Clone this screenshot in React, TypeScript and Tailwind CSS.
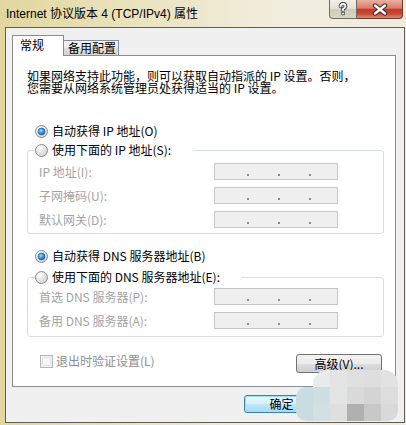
import React from "react";

function Radio({ checked }: { checked: boolean }) {
  return (
    <svg width="13" height="13" viewBox="0 0 13 13" className="shrink-0">
      <defs>
        <radialGradient id="rgOuter" cx="0.35" cy="0.3" r="0.85">
          <stop offset="0" stopColor="#ffffff" />
          <stop offset="1" stopColor="#c9c9c9" />
        </radialGradient>
        <radialGradient id="rgBlue" cx="0.4" cy="0.35" r="0.75">
          <stop offset="0" stopColor="#9fdcff" />
          <stop offset="0.55" stopColor="#2a8fdc" />
          <stop offset="1" stopColor="#0c5aa3" />
        </radialGradient>
      </defs>
      <circle cx="6.5" cy="6.5" r="6" fill="url(#rgOuter)" stroke="#8d8d8d" strokeWidth="1" />
      {checked && <circle cx="6.5" cy="6.5" r="3.4" fill="url(#rgBlue)" stroke="#1b5e99" strokeWidth="0.7" />}
    </svg>
  );
}

function IpBox() {
  return (
    <div className="flex h-[17px] w-[124px] items-start border border-[#c6c6c6] bg-[#efefef] pt-[10px]">
      <div className="ml-[32px] h-[2px] w-[2px] bg-[#8a8a8a]" />
      <div className="ml-[29px] h-[2px] w-[2px] bg-[#8a8a8a]" />
      <div className="ml-[29px] h-[2px] w-[2px] bg-[#8a8a8a]" />
    </div>
  );
}

function Row({ label }: { label: string }) {
  return (
    <div className="flex h-[17px] items-center">
      <div className="w-[186px] pl-[11px] leading-[14px] text-[#a3a3a3]">{label}</div>
      <IpBox />
    </div>
  );
}

const mosaic: string[][] = [
  ["", "bg-[#e8ebeb] rounded-tl-[14px]", "bg-[#e4e4e4]", "bg-[#e0e0e0]", "bg-[#dedede]", "bg-[#e2e2e2] rounded-tr-[14px]"],
  ["bg-[#c9dce2] rounded-tl-[10px]", "bg-[#cfdee2]", "bg-[#e3e5e5]", "bg-[#dadada]", "bg-[#d4d4d4]", "bg-[#dddddd]"],
  ["bg-[#cadce2] rounded-bl-[10px]", "bg-[#d3e0e3]", "bg-[#dfdfdf]", "bg-[#b0b0b0]", "bg-[#c8c8c8]", "bg-[#d9d9d9] rounded-br-[10px]"],
];

export default function App() {
  return (
    <div className="relative h-[425px] w-[406px] overflow-hidden bg-[linear-gradient(90deg,#e2d7a0_0%,#e9e2bb_30%,#f1eedf_70%,#efecdc_100%)] font-['Noto_Sans_CJK_SC',sans-serif] text-[12px] text-black">
      {/* title bar */}
      <div className="flex h-[27px] items-start justify-between">
        <div className="pl-[6px] pt-[6px] font-['Liberation_Sans','Noto_Sans_CJK_SC',sans-serif] text-[12px] leading-[16px] text-black">
          Internet 协议版本 4 (TCP/IPv4) 属性
        </div>
        <div className="mr-[3px] flex">
          <div className="flex h-[19px] w-[28px] items-center justify-center rounded-bl-[4px] border border-t-0 border-[#6f6c62] bg-[linear-gradient(180deg,#f1efe6_0%,#e3e0d2_50%,#cfcbb9_51%,#d9d6c6_100%)]">
            <svg width="14" height="14" viewBox="0 0 14 14">
              <path d="M4.5 4.5 Q4.5 1.8 7 1.8 Q9.5 1.8 9.5 4.3 Q9.5 6 7 7 L7 8.6" fill="none" stroke="#3d3d3d" strokeWidth="3.6" strokeLinecap="round" />
              <circle cx="7" cy="11.4" r="1.9" fill="#3d3d3d" />
              <path d="M4.5 4.5 Q4.5 1.8 7 1.8 Q9.5 1.8 9.5 4.3 Q9.5 6 7 7 L7 8.6" fill="none" stroke="#ffffff" strokeWidth="1.8" strokeLinecap="round" />
              <circle cx="7" cy="11.4" r="1" fill="#ffffff" />
            </svg>
          </div>
          <div className="flex h-[19px] w-[46px] items-center justify-center rounded-br-[4px] border border-l-0 border-t-0 border-[#6b3a32] bg-[linear-gradient(180deg,#eab1a2_0%,#dc7b68_45%,#c43b2b_52%,#c9452f_75%,#e08a6a_100%)]">
            <svg width="18" height="13" viewBox="0 0 18 13">
              <path d="M4 2.5 L14 10.5 M14 2.5 L4 10.5" stroke="#3b2a27" strokeWidth="4.4" strokeLinecap="round" />
              <path d="M4 2.5 L14 10.5 M14 2.5 L4 10.5" stroke="#ffffff" strokeWidth="2.4" strokeLinecap="round" />
            </svg>
          </div>
        </div>
      </div>

      {/* client area */}
      <div className="ml-[5px] flex h-[396px] w-[400px] flex-col border border-[#5f5e58] bg-[#f0f0f0]">
        {/* tabs */}
        <div className="ml-[6px] mt-[7px] flex h-[20px] items-end">
          <div className="relative z-10 -mb-px h-[21px] w-[52px] border border-b-0 border-[#898c95] bg-white pl-[7px] pt-[2px] leading-[14px]">
            常规
          </div>
          <div className="-ml-px h-[15px] w-[56px] border border-b-0 border-[#898c95] bg-[linear-gradient(180deg,#f3f3f3_0%,#ebebeb_50%,#dddddd_51%,#d6d6d6_100%)] pl-[4px] leading-[14px]">
            备用配置
          </div>
        </div>

        {/* panel */}
        <div className="ml-[6px] flex h-[332px] w-[384px] flex-col border border-[#898c95] bg-white">
          <div className="pl-[14px] pt-[14px] leading-[12px]">
            如果网络支持此功能，则可以获取自动指派的 IP 设置。否则，
            <br />
            您需要从网络系统管理员处获得适当的 IP 设置。
          </div>

          <div className="mt-[29px] flex h-[16px] items-center gap-[4px] pl-[22px] leading-[14px]">
            <Radio checked />
            <span>自动获得 IP 地址(O)</span>
          </div>

          <fieldset className="ml-[14px] mt-[3px] w-[357px] rounded-[3px] border border-[#d5dfe5] p-0 pb-[5px]">
            <legend className="ml-[7px] flex h-[16px] items-center gap-[4px] p-0 pr-[22px] leading-[14px]">
              <Radio checked={false} />
              <span>使用下面的 IP 地址(S):</span>
            </legend>
            <div className="mt-[5px] flex flex-col gap-[7px]">
              <Row label="IP 地址(I):" />
              <Row label="子网掩码(U):" />
              <Row label="默认网关(D):" />
            </div>
          </fieldset>

          <div className="mt-[14px] flex h-[16px] items-center gap-[4px] pl-[22px] leading-[14px]">
            <Radio checked />
            <span>自动获得 DNS 服务器地址(B)</span>
          </div>

          <fieldset className="ml-[14px] mt-[5px] w-[357px] rounded-[3px] border border-[#d5dfe5] p-0 pb-[7px]">
            <legend className="ml-[7px] flex h-[16px] items-center gap-[4px] p-0 pr-[21px] leading-[14px]">
              <Radio checked={false} />
              <span>使用下面的 DNS 服务器地址(E):</span>
            </legend>
            <div className="mt-[3px] flex flex-col gap-[7px]">
              <Row label="首选 DNS 服务器(P):" />
              <Row label="备用 DNS 服务器(A):" />
            </div>
          </fieldset>

          <div className="mt-[17px] flex items-start justify-between pl-[27px] pr-[13px]">
            <div className="flex h-[14px] items-center gap-[3px] leading-[14px] text-[#8e8e8e]">
              <div className="h-[13px] w-[13px] border border-[#b5b5b5] bg-[#f4f4f4] p-[1px]">
                <div className="h-full w-full border border-[#e2e2e2] bg-[#f7f7f7]" />
              </div>
              <span>退出时验证设置(L)</span>
            </div>
            <div className="flex h-[19px] w-[86px] items-center justify-center rounded-[3px] border border-[#707070] bg-[linear-gradient(180deg,#f2f2f2_0%,#ebebeb_50%,#dddddd_51%,#cfcfcf_100%)] leading-[14px]">
              高级(V)...
            </div>
          </div>
        </div>

        {/* dialog buttons */}
        <div className="mt-[8px] flex justify-end gap-[3px] pr-[7px]">
          <div className="flex h-[18px] w-[75px] items-center justify-center rounded-[3px] border border-[#3c7fb1] bg-[linear-gradient(180deg,#eaf6fd_0%,#d9f0fc_50%,#bee6fd_51%,#a7d9f5_100%)] leading-[14px] shadow-[inset_0_0_0_1px_#9ee0f8]">
            确定
          </div>
          <div className="flex h-[18px] w-[75px] items-center justify-center rounded-[3px] border border-[#707070] bg-[linear-gradient(180deg,#f2f2f2_0%,#ebebeb_50%,#dddddd_51%,#cfcfcf_100%)] leading-[14px]">
            取消
          </div>
        </div>
      </div>

      {/* pixelated blur overlay */}
      <div className="absolute left-[296px] top-[370px] flex flex-col">
        {mosaic.map((row, r) => (
          <div key={r} className="flex">
            {row.map((c, i) => (
              <div key={i} className={"h-[17px] w-[17px] " + c} />
            ))}
          </div>
        ))}
      </div>
    </div>
  );
}
